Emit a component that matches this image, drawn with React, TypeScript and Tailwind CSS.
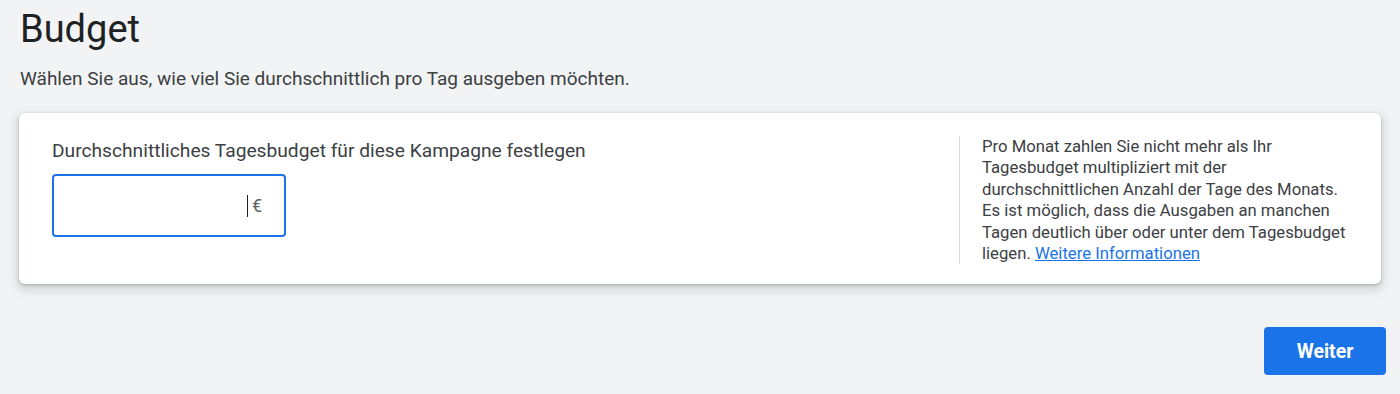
export default function App() {
  return (
    <div className="min-h-[394px] w-full bg-[#f1f3f4] font-['Roboto',sans-serif] pl-[19px] pr-[14px] pt-[7px]">
      <h1 className="text-[38px] leading-[44px] font-normal text-[#202124] pl-[1px]">Budget</h1>
      <p className="mt-[16px] text-[19px] leading-[24px] text-[#3c4043] pl-[1px]">
        Wählen Sie aus, wie viel Sie durchschnittlich pro Tag ausgeben möchten.
      </p>

      <div className="mt-[22px] mr-[5px] flex rounded-[6px] bg-white pt-[23px] pb-[20px] shadow-[0_1px_3px_rgba(60,64,67,0.3),0_4px_8px_3px_rgba(60,64,67,0.15)]">
        <div className="flex-1 pl-[33px] pt-[3px]">
          <label className="block text-[19.2px] leading-[24px] text-[#3c4043]">
            Durchschnittliches Tagesbudget für diese Kampagne festlegen
          </label>
          <div className="mt-[11px] flex h-[63px] w-[234px] items-center justify-end rounded-[4px] border-2 border-[#1a73e8] pr-[22px]">
            <span className="h-[22px] w-px bg-[#202124]" />
            <span className="ml-[4px] text-[18px] text-[#5f6368]">€</span>
          </div>
        </div>
        <div className="mr-[32px] w-[390px] border-l border-[#dadce0] pl-[22px] text-[16.7px] leading-[21.4px] text-[#3c4043] whitespace-nowrap">
          Pro Monat zahlen Sie nicht mehr als Ihr
          <br />
          Tagesbudget multipliziert mit der
          <br />
          durchschnittlichen Anzahl der Tage des Monats.
          <br />
          Es ist möglich, dass die Ausgaben an manchen
          <br />
          Tagen deutlich über oder unter dem Tagesbudget
          <br />
          liegen.{" "}
          <a href="#" className="text-[#1a73e8] underline">
            Weitere Informationen
          </a>
        </div>
      </div>

      <div className="mt-[43px] flex justify-end">
        <button className="h-[48px] w-[122px] rounded-[4px] bg-[#1a73e8] text-[19.5px] font-bold text-white">
          Weiter
        </button>
      </div>
    </div>
  );
}
